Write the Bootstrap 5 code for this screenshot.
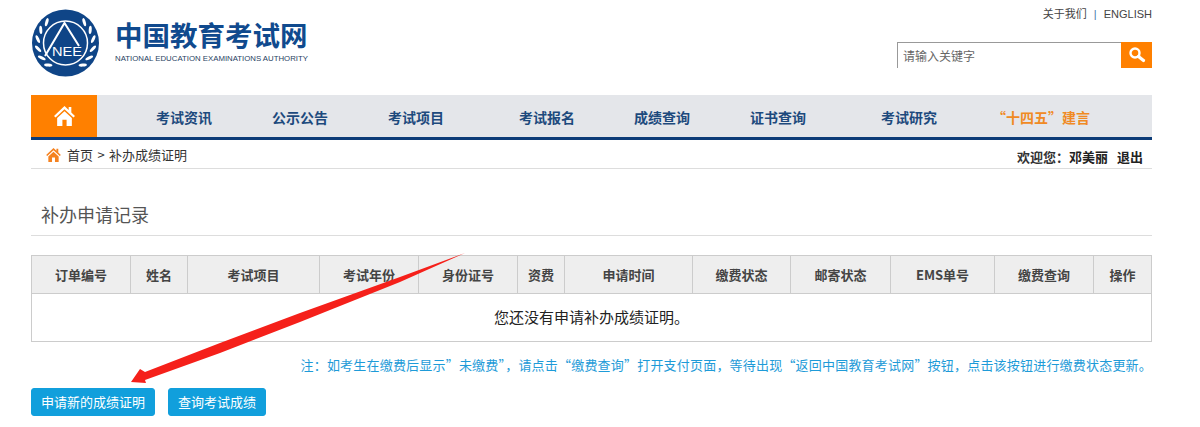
<!DOCTYPE html>
<html lang="zh-CN">
<head>
    <meta charset="UTF-8">
    <meta name="viewport" content="width=device-width, initial-scale=1.0">
    <title>补办成绩证明</title>
    <link href="https://cdn.jsdelivr.net/npm/bootstrap@5.3.0/dist/css/bootstrap.min.css" rel="stylesheet">
    <style>
        body {
            background-color: #fff;
            color: #333;
            font-family: "Noto Sans CJK SC", "Liberation Sans", sans-serif;
            font-size: 13px;
        }
        .page-wrap { position: relative; width: 1121px; margin-left: 31px; height: 427px; overflow: hidden; }
        .top-head { height: 95px; }
        .logo-mark { width: 70px; height: 70px; margin-top: 8px; flex: none; }
        .logo-text { margin-left: 14px; }
        .logo-cn { font-family: "Liberation Sans", "Noto Sans CJK SC", sans-serif; font-size: 27.5px; line-height: 30px; font-weight: 700; color: #104a8e; margin-top: 22px; }
        .logo-en { font-family: "Liberation Sans", sans-serif; font-size: 7.8px; line-height: 11px; color: #27415f; margin-top: 1px; white-space: nowrap; }
        .top-links { font-family: "Liberation Sans", "Noto Sans CJK SC", sans-serif; font-size: 11px; line-height: 14px; padding-top: 7px; color: #444; text-align: right; }
        .top-links span { color: #4a7ba8; margin: 0 4px; }
        .search-box { width: 255px; height: 26px; margin-top: 21px; }
        .search-input { width: 224px; height: 26px; border: 0; border-top: 1px solid #999; border-left: 1px solid #999; padding: 0 5px; font-size: 12px; outline: none; }
        .search-input::placeholder { color: #666; }
        .search-btn { width: 31px; height: 26px; background-color: #ff8000; }
        .main-nav { height: 45px; background-color: #e4e6ea; border-bottom: 3px solid #0d3c78; }
        .home-tab { width: 66px; height: 42px; background-color: #ff8000; }
        .nav-item-a { font-size: 14px; line-height: 20px; padding-top: 1px; font-weight: 700; color: #1d4a7d; text-decoration: none; margin-left: 60px; width: 56px; white-space: nowrap; text-align: center; }
        .nav-item-a.first-item { margin-left: 59px; }
        .nav-item-a.tight-gap { margin-left: 59px; }
        .nav-item-a.wide-gap { margin-left: 75px; }
        .nav-item-a.hot-item { color: #f08a24; width: 98px; margin-left: 55px; }
        .crumb-bar { height: 29px; border-bottom: 1px solid #ddd; padding: 0 9px 0 15px; }
        .crumb-left { color: #333; gap: 6px; padding-top: 1px; word-spacing: 1.5px; }
        .crumb-right { font-weight: 700; color: #333; padding-top: 5px; }
        .crumb-right a { color: #222; text-decoration: none; }
        .crumb-right a + a { margin-left: 9px; }
        .rec-title { font-size: 18px; font-weight: 400; line-height: 24px; color: #555; margin: 33px 0 0; padding: 0 10px 9px; border-bottom: 1px solid #ddd; height: 34px; }
        .rec-table { width: 1120px; table-layout: fixed; margin: 19px 0 0; border-color: #ccc; }
        .rec-table th { height: 38px; padding: 0; background-color: #eee; color: #444; font-size: 13px; font-weight: 700; text-align: center; vertical-align: middle; }
        .rec-table td { height: 48px; padding: 0; font-size: 15px; color: #222; text-align: center; vertical-align: middle; }
        .rec-table col:nth-child(1) { width: 99px; }
        .rec-table col:nth-child(2) { width: 57px; }
        .rec-table col:nth-child(3) { width: 132px; }
        .rec-table col:nth-child(4) { width: 99px; }
        .rec-table col:nth-child(5) { width: 99px; }
        .rec-table col:nth-child(6) { width: 47px; }
        .rec-table col:nth-child(7) { width: 128px; }
        .rec-table col:nth-child(8) { width: 98px; }
        .rec-table col:nth-child(9) { width: 100px; }
        .rec-table col:nth-child(10) { width: 104px; }
        .rec-table col:nth-child(11) { width: 99px; }
        .rec-table col:nth-child(12) { width: 58px; }
        .fee-note { font-size: 13px; line-height: 18px; letter-spacing: .2px; color: #1e9bd8; text-align: right; margin-top: 14px; white-space: nowrap; }
        .act-btn { height: 28px; padding: 0 9px; background-color: #119fdc; border-color: #119fdc; color: #fff; font-size: 13px; line-height: 26px; border-radius: 3px; }
        .act-row { margin-top: 14px; gap: 13px; }
        .red-arrow { position: absolute; left: -31px; top: 0; width: 1200px; height: 427px; pointer-events: none; }
    </style>
</head>
<body>

    <div class="page-wrap">
        <div class="top-head d-flex justify-content-between">
            <div class="d-flex">
                <svg class="logo-mark" viewBox="0 0 70 70">
                    <circle cx="34.500" cy="35" r="33.500" fill="#0f4587"/>
                    <circle cx="34.500" cy="35" r="22" fill="none" stroke="#fff" stroke-width="1.500"/>
                    <g fill="#fff">
                        <ellipse cx="34.500" cy="7" rx="1.500" ry="4.200" transform="rotate(42 34.500 35) rotate(-58 34.500 7)"/>
                        <ellipse cx="34.500" cy="7" rx="1.500" ry="4.200" transform="rotate(62 34.500 35) rotate(-58 34.500 7)"/>
                        <ellipse cx="34.500" cy="7" rx="1.500" ry="4.200" transform="rotate(82 34.500 35) rotate(-58 34.500 7)"/>
                        <ellipse cx="34.500" cy="7" rx="1.500" ry="4.200" transform="rotate(102 34.500 35) rotate(-58 34.500 7)"/>
                        <ellipse cx="34.500" cy="7" rx="1.500" ry="4.200" transform="rotate(122 34.500 35) rotate(-58 34.500 7)"/>
                        <ellipse cx="34.500" cy="7" rx="1.500" ry="4.200" transform="rotate(142 34.500 35) rotate(-58 34.500 7)"/>
                        <ellipse cx="34.500" cy="7" rx="1.500" ry="4.200" transform="rotate(-42 34.500 35) rotate(58 34.500 7)"/>
                        <ellipse cx="34.500" cy="7" rx="1.500" ry="4.200" transform="rotate(-62 34.500 35) rotate(58 34.500 7)"/>
                        <ellipse cx="34.500" cy="7" rx="1.500" ry="4.200" transform="rotate(-82 34.500 35) rotate(58 34.500 7)"/>
                        <ellipse cx="34.500" cy="7" rx="1.500" ry="4.200" transform="rotate(-102 34.500 35) rotate(58 34.500 7)"/>
                        <ellipse cx="34.500" cy="7" rx="1.500" ry="4.200" transform="rotate(-122 34.500 35) rotate(58 34.500 7)"/>
                        <ellipse cx="34.500" cy="7" rx="1.500" ry="4.200" transform="rotate(-142 34.500 35) rotate(58 34.500 7)"/>
                    </g>
                    <path d="M14 48 L33.500 15 L48 38" fill="none" stroke="#fff" stroke-width="2"/>
                    <text x="21" y="48" font-family="Liberation Sans, sans-serif" font-size="13" textLength="30" lengthAdjust="spacingAndGlyphs" fill="#fff">NEE</text>
                </svg>
                <div class="logo-text">
                    <div class="logo-cn">中国教育考试网</div>
                    <div class="logo-en">NATIONAL EDUCATION EXAMINATIONS AUTHORITY</div>
                </div>
            </div>
            <div class="d-flex flex-column align-items-end">
                <div class="top-links">关于我们 <span>|</span> ENGLISH</div>
                <div class="search-box d-flex">
                    <input class="search-input" type="text" placeholder="请输入关键字">
                    <div class="search-btn d-flex align-items-center justify-content-center">
                        <svg width="18" height="18" viewBox="0 0 18 18">
                            <circle cx="7" cy="7" r="4.500" fill="none" stroke="#fff" stroke-width="2.400"/>
                            <path d="M10.500 10.500 L15.500 14.500" stroke="#fff" stroke-width="3.200" stroke-linecap="round"/>
                        </svg>
                    </div>
                </div>
            </div>
        </div>

        <nav class="main-nav d-flex align-items-center">
            <a class="home-tab d-flex align-items-center justify-content-center" href="#">
                <svg width="21" height="20" viewBox="0 0 20 19">
                    <path d="M10 0 L0 9.500 L1.500 11 L10 3 L18.500 11 L20 9.500 L16.500 6.200 V1 H14 V3.800 Z" fill="#fff"/>
                    <path d="M10 5 L3 11.500 V19 H8 V13 H12 V19 H17 V11.500 Z" fill="#fff"/>
                </svg>
            </a>
            <a class="nav-item-a first-item" href="#">考试资讯</a>
            <a class="nav-item-a" href="#">公示公告</a>
            <a class="nav-item-a" href="#">考试项目</a>
            <a class="nav-item-a wide-gap" href="#">考试报名</a>
            <a class="nav-item-a tight-gap" href="#">成绩查询</a>
            <a class="nav-item-a" href="#">证书查询</a>
            <a class="nav-item-a wide-gap" href="#">考试研究</a>
            <a class="nav-item-a hot-item" href="#">“十四五”建言</a>
        </nav>

        <div class="crumb-bar d-flex align-items-center justify-content-between">
            <div class="crumb-left d-flex align-items-center">
                <svg width="15" height="14" viewBox="0 0 20 19">
                    <path d="M10 0 L0 9.500 L1.500 11 L10 3 L18.500 11 L20 9.500 L16.500 6.200 V1 H14 V3.800 Z" fill="#f58220"/>
                    <path d="M10 5 L3 11.500 V19 H8 V13 H12 V19 H17 V11.500 Z" fill="#f58220"/>
                </svg>
                <span>首页 &gt; 补办成绩证明</span>
            </div>
            <div class="crumb-right">欢迎您：<a href="#">邓美丽</a><a href="#">退出</a></div>
        </div>

        <h2 class="rec-title">补办申请记录</h2>

        <table class="table table-bordered rec-table">
            <colgroup>
                <col><col><col><col><col><col><col><col><col><col><col><col>
            </colgroup>
            <thead>
                <tr>
                    <th>订单编号</th>
                    <th>姓名</th>
                    <th>考试项目</th>
                    <th>考试年份</th>
                    <th>身份证号</th>
                    <th>资费</th>
                    <th>申请时间</th>
                    <th>缴费状态</th>
                    <th>邮寄状态</th>
                    <th>EMS单号</th>
                    <th>缴费查询</th>
                    <th>操作</th>
                </tr>
            </thead>
            <tbody>
                <tr><td colspan="12">您还没有申请补办成绩证明。</td></tr>
            </tbody>
        </table>

        <p class="fee-note mb-0">注：如考生在缴费后显示”未缴费”，请点击“缴费查询”打开支付页面，等待出现“返回中国教育考试网”按钮，点击该按钮进行缴费状态更新。</p>

        <div class="act-row d-flex">
            <button class="btn act-btn" type="button">申请新的成绩证明</button>
            <button class="btn act-btn" type="button">查询考试成绩</button>
        </div>

        <svg class="red-arrow" viewBox="0 0 1200 427">
            <polygon fill="#f5201a" points="465,253 400,277 300,313 220,343 145,372 140,369 131,382 146,383 145,380 220,353 300,322 400,282"/>
        </svg>
    </div>

    <script src="https://cdn.jsdelivr.net/npm/bootstrap@5.3.0/dist/js/bootstrap.bundle.min.js"></script>
</body>
</html>
